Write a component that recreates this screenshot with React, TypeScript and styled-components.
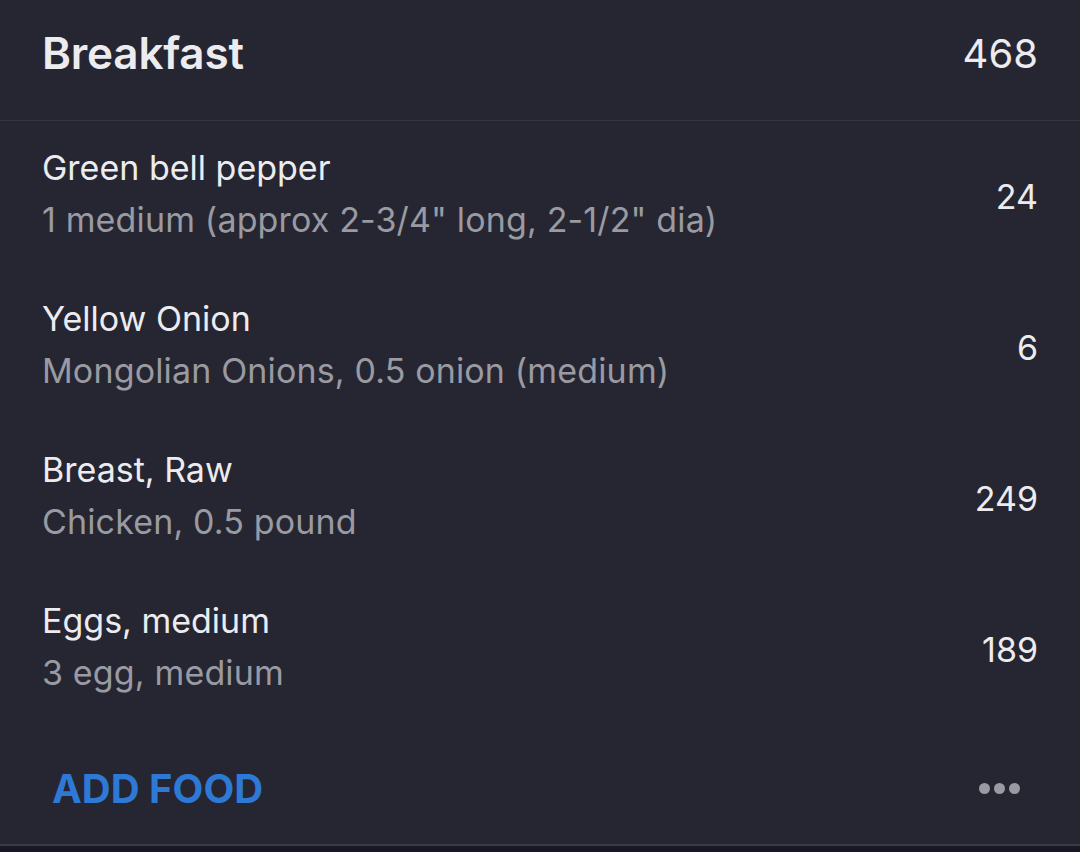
import React from "react"
import styled, { createGlobalStyle } from "styled-components"

const GlobalStyle = createGlobalStyle`
  html, body { margin: 0; padding: 0; background: #252631; }
  body { font-family: Inter, "Liberation Sans", sans-serif; -webkit-font-smoothing: antialiased; }
`

const Card = styled.div`
  width: 1080px;
  height: 852px;
  background: #252631;
  display: flex;
  flex-direction: column;
  box-sizing: border-box;
`

const Header = styled.div`
  height: 121px;
  box-sizing: border-box;
  display: flex;
  align-items: center;
  justify-content: space-between;
  padding: 0 42px 14px 42px;
  border-bottom: 1px solid #343541;
`

const Title = styled.div`
  color: #ececf0;
  font-size: 44px;
  font-weight: 600;
  letter-spacing: -0.2px;
`

const Total = styled.div`
  color: #ececf0;
  font-size: 40px;
  font-weight: 400;
`

const List = styled.div`
  display: flex;
  flex-direction: column;
  padding-top: 25px;
`

const Row = styled.div`
  height: 151px;
  display: flex;
  align-items: flex-start;
  justify-content: space-between;
  padding: 0 42px;
`

const Info = styled.div`
  display: flex;
  flex-direction: column;
  gap: 8px;
`

const Name = styled.div`
  color: #ececf0;
  font-size: 34px;
  line-height: 44px;
`

const Detail = styled.div`
  color: #9a9aa2;
  font-size: 34px;
  line-height: 44px;
  letter-spacing: 0.15px;
`

const Kcal = styled.div`
  color: #ececf0;
  font-size: 34px;
  line-height: 44px;
  margin-top: 29px;
`

const Footer = styled.div`
  flex: 1;
  display: flex;
  align-items: center;
  justify-content: space-between;
  padding: 0 60px 18px 52px;
  border-bottom: 2px solid #3a3b45;
`

const AddButton = styled.button`
  background: none;
  border: 0;
  padding: 0;
  font-family: inherit;
  color: #2e79d6;
  font-size: 40px;
  font-weight: 700;
  cursor: pointer;
`

const Dots = styled.div`
  display: flex;
  gap: 4px;
`

const Dot = styled.span`
  width: 11px;
  height: 11px;
  border-radius: 50%;
  background: #9a9aa3;
`

const BottomBar = styled.div`
  height: 6px;
  background: #171823;
`

const foods = [
  { name: "Green bell pepper", detail: "1 medium (approx 2-3/4\" long, 2-1/2\" dia)", kcal: 24 },
  { name: "Yellow Onion", detail: "Mongolian Onions, 0.5 onion (medium)", kcal: 6 },
  { name: "Breast, Raw", detail: "Chicken, 0.5 pound", kcal: 249 },
  { name: "Eggs, medium", detail: "3 egg, medium", kcal: 189 },
]

export default function App() {
  return (
    <>
      <GlobalStyle />
      <Card>
        <Header>
          <Title>Breakfast</Title>
          <Total>468</Total>
        </Header>
        <List>
          {foods.map((f) => (
            <Row key={f.name}>
              <Info>
                <Name>{f.name}</Name>
                <Detail>{f.detail}</Detail>
              </Info>
              <Kcal>{f.kcal}</Kcal>
            </Row>
          ))}
        </List>
        <Footer>
          <AddButton>ADD FOOD</AddButton>
          <Dots>
            <Dot />
            <Dot />
            <Dot />
          </Dots>
        </Footer>
        <BottomBar />
      </Card>
    </>
  )
}
